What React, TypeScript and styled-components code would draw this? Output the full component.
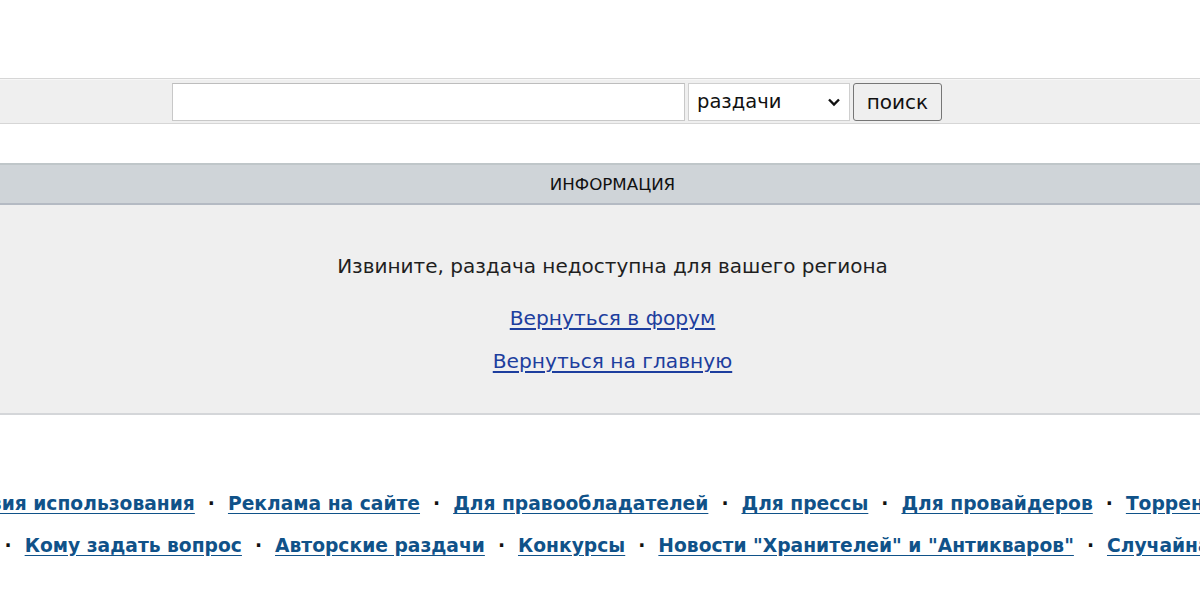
import React from "react";
import styled, { createGlobalStyle } from "styled-components";

const GlobalStyle = createGlobalStyle`
  html, body {
    margin: 0;
    padding: 0;
    background: #fff;
    overflow: hidden;
  }
  body {
    font-family: "DejaVu Sans", Verdana, sans-serif;
    color: #222;
  }
`;

const Page = styled.div`
  width: 1225px;
  padding-top: 78px;
`;

const SearchBand = styled.form`
  display: flex;
  align-items: center;
  gap: 3px;
  height: 44px;
  padding-left: 172px;
  background: #efefef;
  border-top: 1px solid #d6d6d6;
  border-bottom: 1px solid #d6d6d6;
  box-shadow: inset 0 1px 0 #f7f7f7;
`;

const SearchInput = styled.input`
  box-sizing: border-box;
  width: 513px;
  height: 38px;
  margin: 1px 0 0;
  border: 1px solid #c8c8c8;
  border-top-color: #bdbdbd;
  background: #fff;
  outline: none;
`;

const SelectBox = styled.div`
  position: relative;
  box-sizing: border-box;
  width: 162px;
  height: 38px;
  margin-top: 1px;
  border: 1px solid #cfcfcf;
  background: #fff;
  display: flex;
  align-items: center;
  padding-left: 8px;
  font-size: 19.5px;
  color: #111;
`;

const Chevron = styled.svg`
  position: absolute;
  right: 8px;
  top: 50%;
  margin-top: -5px;
`;

const SearchButton = styled.button`
  box-sizing: border-box;
  width: 89px;
  height: 38px;
  margin: 1px 0 0;
  border: 1px solid #767676;
  border-radius: 3px;
  background: #efefef;
  font-family: "DejaVu Sans", Verdana, sans-serif;
  font-size: 20px;
  color: #111;
  padding: 0;
`;

const InfoBox = styled.section`
  margin-top: 39px;
  background: #efefef;
  border-bottom: 2px solid #d4d6d9;
`;

const InfoHeader = styled.div`
  height: 38px;
  display: flex;
  align-items: center;
  justify-content: center;
  background: #cfd4d8;
  border-top: 2px solid #bfc6c9;
  border-bottom: 2px solid #b4bac3;
  font-size: 16.7px;
  color: #111;
`;

const InfoBody = styled.div`
  display: flex;
  flex-direction: column;
  align-items: center;
  padding: 49px 0 40px;
  gap: 19px;
`;

const Message = styled.div`
  font-size: 20px;
  line-height: 24px;
  color: #1f1f1f;
  margin-bottom: 9px;
`;

const BackLink = styled.a`
  font-size: 20.2px;
  line-height: 24px;
  color: #1d3e9e;
  text-decoration: underline;
  text-underline-offset: 3px;
`;

const Footer = styled.footer`
  margin-top: 77px;
  display: flex;
  flex-direction: column;
  gap: 18px;
`;

const FooterRow = styled.div<{ $shift: number }>`
  display: flex;
  justify-content: center;
  align-items: center;
  white-space: nowrap;
  line-height: 24px;
  transform: translateX(${(p) => p.$shift}px);
`;

const FooterLink = styled.a`
  flex: none;
  font-size: 18.7px;
  font-weight: bold;
  color: #105289;
  text-decoration: underline;
  text-underline-offset: 3px;
`;

const Dot = styled.span`
  flex: none;
  font-size: 18.7px;
  font-weight: bold;
  color: #111;
  margin: 0 13px;
`;

const row1 = [
  "Условия использования",
  "Реклама на сайте",
  "Для правообладателей",
  "Для прессы",
  "Для провайдеров",
  "Торрент-клиенты",
];

const row2 = [
  "Помощь новичкам",
  "Кому задать вопрос",
  "Авторские раздачи",
  "Конкурсы",
  'Новости "Хранителей" и "Антикваров"',
  "Случайная раздача",
];

const LinkRow: React.FC<{ items: string[]; shift: number }> = ({ items, shift }) => (
  <FooterRow $shift={shift}>
    {items.map((t, i) => (
      <React.Fragment key={t}>
        {i > 0 && <Dot>·</Dot>}
        <FooterLink href="#">{t}</FooterLink>
      </React.Fragment>
    ))}
  </FooterRow>
);

export default function App() {
  return (
    <Page>
      <GlobalStyle />
      <SearchBand onSubmit={(e) => e.preventDefault()}>
        <SearchInput type="text" />
        <SelectBox>
          раздачи
          <Chevron width="14" height="10" viewBox="0 0 14 10">
            <path d="M2 2.5 L7 7.5 L12 2.5" fill="none" stroke="#111" strokeWidth="2.4" />
          </Chevron>
        </SelectBox>
        <SearchButton type="submit">поиск</SearchButton>
      </SearchBand>

      <InfoBox>
        <InfoHeader>ИНФОРМАЦИЯ</InfoHeader>
        <InfoBody>
          <Message>Извините, раздача недоступна для вашего региона</Message>
          <BackLink href="#">Вернуться в форум</BackLink>
          <BackLink href="#">Вернуться на главную</BackLink>
        </InfoBody>
      </InfoBox>

      <Footer>
        <LinkRow items={row1} shift={14} />
        <LinkRow items={row2} shift={-57} />
      </Footer>
    </Page>
  );
}
